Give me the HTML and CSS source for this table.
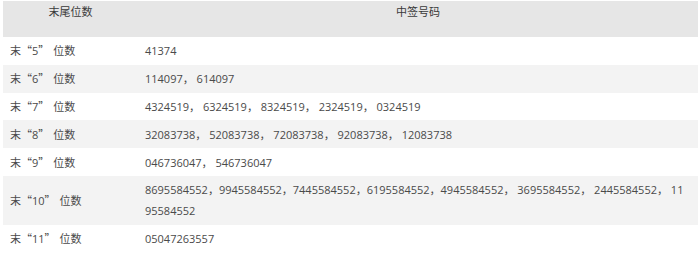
FILE: index.html
```html
<!DOCTYPE html>
<html lang="zh-CN">
<head>
<meta charset="utf-8">
<link rel="stylesheet" href="styles.css">
</head>
<body>
<table class="lottery">
  <thead>
    <tr>
      <th class="col-tail">末尾位数</th>
      <th class="col-nums">中签号码</th>
    </tr>
  </thead>
  <tbody>
    <tr><td>末<span class="q">“</span>5<span class="q q-close">”</span>位数</td><td>41374</td></tr>
    <tr class="alt"><td>末<span class="q">“</span>6<span class="q q-close">”</span>位数</td><td>114097， 614097</td></tr>
    <tr><td>末<span class="q">“</span>7<span class="q q-close">”</span>位数</td><td>4324519， 6324519， 8324519， 2324519， 0324519</td></tr>
    <tr class="alt"><td>末<span class="q">“</span>8<span class="q q-close">”</span>位数</td><td>32083738， 52083738， 72083738， 92083738， 12083738</td></tr>
    <tr><td>末<span class="q">“</span>9<span class="q q-close">”</span>位数</td><td>046736047， 546736047</td></tr>
    <tr class="alt"><td>末<span class="q">“</span>10<span class="q q-close">”</span>位数</td><td>8695584552，9945584552，7445584552，6195584552，4945584552， 3695584552， 2445584552， 1195584552</td></tr>
    <tr><td>末<span class="q">“</span>11<span class="q q-close">”</span>位数</td><td>05047263557</td></tr>
  </tbody>
</table>
</body>
</html>
```

FILE: styles.css
```css
html, body {
  margin: 0;
  padding: 0;
  background: #ffffff;
}

body {
  padding: 1px 2px 0 3px;
  font-family: "Open Sans", "Noto Sans CJK SC", sans-serif;
  font-size: 11px;
  color: #4a4a4a;
}

.lottery {
  width: 695px;
  border-collapse: collapse;
  table-layout: fixed;
}

.lottery th {
  height: 36px;
  padding: 0;
  background: #e6e6e6;
  font-weight: normal;
  color: #3a3a3a;
  text-align: center;
  vertical-align: top;
  line-height: 21px;
}

.col-tail {
  width: 135px;
}

.lottery td {
  padding: 3.4px 10px 3.4px 7px;
  line-height: 21px;
  vertical-align: middle;
  word-break: break-all;
}

.q {
  display: inline-block;
  width: 11px;
  font-family: "Noto Sans CJK SC", sans-serif;
  text-align: center;
}

.q-close {
  margin-right: 4px;
}

.lottery tr.alt td {
  background: #f3f3f3;
}
```
